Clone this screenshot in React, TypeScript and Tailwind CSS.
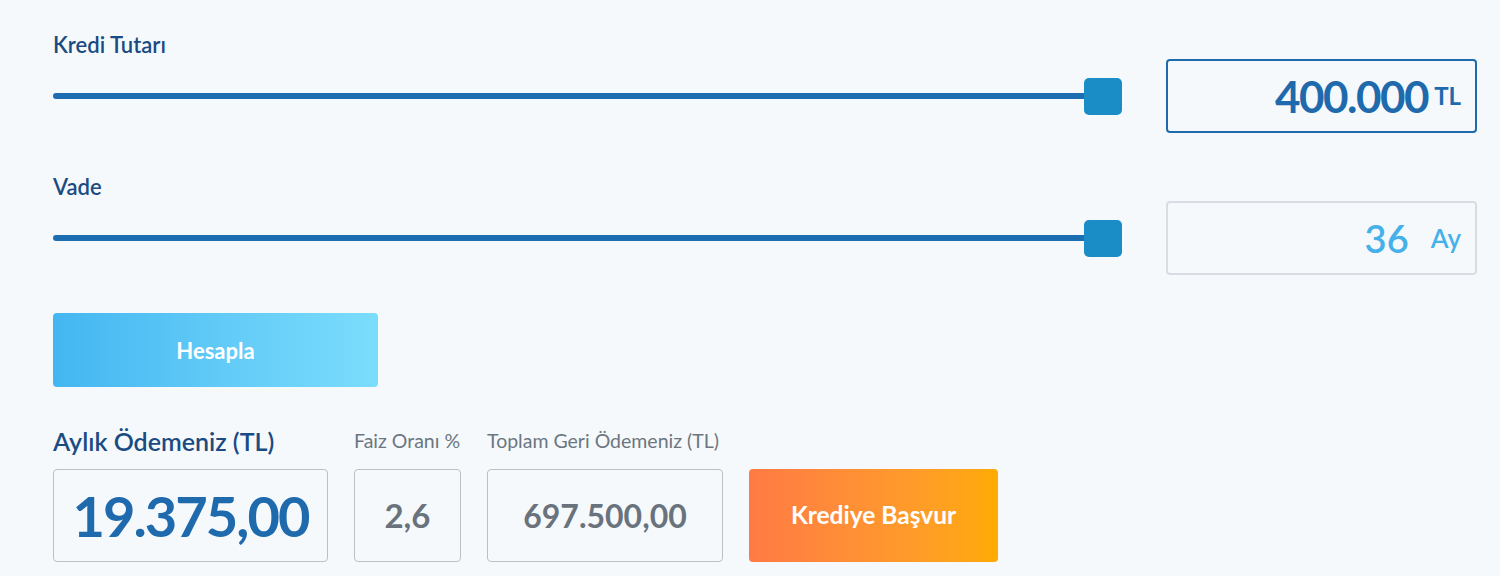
import React from "react";

const font = { fontFamily: "Lato, 'Noto Sans', sans-serif" };

function Slider() {
  return (
    <div className="relative flex h-[37px] flex-1 items-center">
      <div className="h-[6px] w-full rounded-sm bg-[#1c6db2]" />
      <div className="absolute right-0 top-0 h-[37px] w-[38px] rounded-[5px] bg-[#1a8dc7]" />
    </div>
  );
}

export default function App() {
  return (
    <div className="min-h-[576px] w-full bg-[#f5f9fc] pl-[53px] pr-[23px] pt-[32px]" style={font}>
      <div className="text-[22px] font-semibold leading-[26px] text-[#1a4b82]">Kredi Tutarı</div>
      <div className="mt-[1px] flex items-center gap-[44px]">
        <Slider />
        <div className="flex h-[74px] w-[311px] items-center justify-end rounded-[4px] border-2 border-[#1e6aad] bg-[#f5f9fc] pr-[14px]">
          <span className="text-[44px] font-bold leading-none tracking-[-1.5px] text-[#1e6aad]">400.000</span>
          <span className="ml-[6px] text-[24px] font-bold leading-none text-[#1e6aad]">TL</span>
        </div>
      </div>

      <div className="mt-[41px] text-[22px] font-semibold leading-[26px] text-[#1a4b82]">Vade</div>
      <div className="mt-[1px] flex items-center gap-[44px]">
        <Slider />
        <div className="flex h-[74px] w-[311px] items-center justify-end rounded-[4px] border-2 border-[#d7dde3] bg-[#f5f9fc] pr-[14px]">
          <span className="text-[38px] font-semibold leading-none text-[#46b0e9]">36</span>
          <span className="ml-[22px] text-[26px] font-semibold leading-none text-[#46b0e9]">Ay</span>
        </div>
      </div>

      <button className="mt-[38px] flex h-[74px] w-[325px] items-center justify-center rounded-[4px] bg-gradient-to-r from-[#43b6f1] to-[#7bddfc] text-[22px] font-bold text-white">
        Hesapla
      </button>

      <div className="mt-[40px] flex items-end gap-[26px]">
        <div className="flex w-[275px] flex-col">
          <div className="mb-[14px] whitespace-nowrap text-[25px] font-semibold leading-[28px] text-[#1a4b82]">Aylık Ödemeniz (TL)</div>
          <div className="flex h-[93px] items-center justify-center rounded-[4px] border border-[#b9c0c7]">
            <span className="text-[56px] font-bold tracking-[-2px] text-[#1e6aad]">19.375,00</span>
          </div>
        </div>
        <div className="flex w-[107px] flex-col">
          <div className="mb-[17px] whitespace-nowrap text-[19.5px] leading-[22px] text-[#6c7680]">Faiz Oranı %</div>
          <div className="flex h-[93px] items-center justify-center rounded-[4px] border border-[#b9c0c7]">
            <span className="text-[33px] font-bold text-[#6a737d]">2,6</span>
          </div>
        </div>
        <div className="flex w-[236px] flex-col">
          <div className="mb-[17px] whitespace-nowrap text-[19.5px] leading-[22px] text-[#6c7680]">Toplam Geri Ödemeniz (TL)</div>
          <div className="flex h-[93px] items-center justify-center rounded-[4px] border border-[#b9c0c7]">
            <span className="text-[32px] font-bold text-[#6a737d]">697.500,00</span>
          </div>
        </div>
        <button className="flex h-[93px] w-[249px] items-center justify-center rounded-[4px] bg-gradient-to-r from-[#ff7a44] to-[#ffab00] text-[24.5px] font-bold text-white">
          Krediye Başvur
        </button>
      </div>
    </div>
  );
}
